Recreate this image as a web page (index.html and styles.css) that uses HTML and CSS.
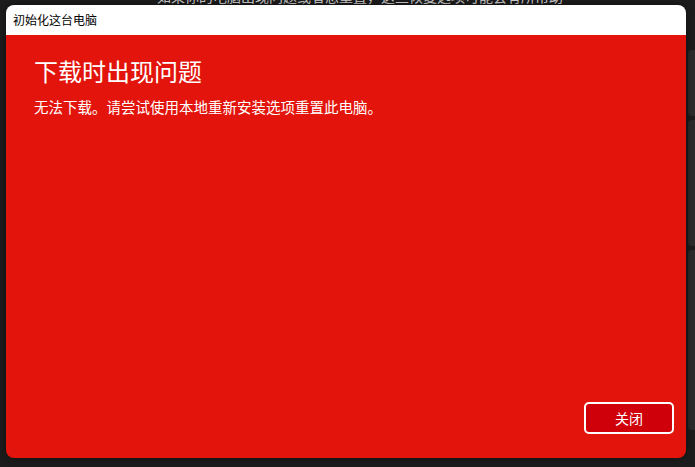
FILE: index.html
```html
<!DOCTYPE html>
<html lang="zh-CN">
<head>
<meta charset="utf-8">
<link rel="stylesheet" href="styles.css">
</head>
<body>
<div class="backdrop">
  <p class="bg-text">如果你的电脑出现问题或者想重置，这些恢复选项可能会有所帮助</p>
  <div class="bg-card c1"></div>
  <div class="bg-card c2"></div>
  <div class="bg-card c3"></div>
  <div class="bg-card c4"></div>
</div>
<div class="window">
  <div class="titlebar">初始化这台电脑</div>
  <div class="content">
    <h1 class="heading">下载时出现问题</h1>
    <p class="message">无法下载。请尝试使用本地重新安装选项重置此电脑。</p>
    <div class="spacer"></div>
    <div class="actions">
      <button class="btn">关闭</button>
    </div>
  </div>
</div>
</body>
</html>
```
FILE: styles.css
```css
html, body {
  margin: 0;
  padding: 0;
  width: 695px;
  height: 467px;
  overflow: hidden;
  background: #1c1c1c;
  font-family: "Noto Sans CJK SC", "Microsoft YaHei", sans-serif;
}
.backdrop {
  position: relative;
  width: 695px;
  height: 467px;
}
.bg-text {
  position: absolute;
  margin: 0;
  left: 157px;
  top: -14px;
  font-size: 14px;
  line-height: 20px;
  color: #cfcfcf;
  white-space: nowrap;
}
.bg-card {
  position: absolute;
  left: 688px;
  width: 20px;
  background: #2b2b2b;
  border-radius: 4px;
}
.c1 { top: 50px; height: 66px; }
.c2 { top: 120px; height: 66px; }
.c3 { top: 180px; height: 66px; }
.c4 { top: 250px; height: 180px; }
.window {
  position: absolute;
  left: 6px;
  top: 5px;
  width: 680px;
  height: 453px;
  border-radius: 8px;
  overflow: hidden;
  display: flex;
  flex-direction: column;
  box-shadow: 0 0 6px rgba(0,0,0,0.5);
}
.titlebar {
  height: 30px;
  flex: none;
  background: #ffffff;
  color: #000;
  font-size: 12px;
  line-height: 30px;
  padding-left: 7px;
}
.content {
  flex: 1;
  background: #e2140b;
  display: flex;
  flex-direction: column;
  padding: 19px 12px 24px 28px;
}
.heading {
  margin: 0;
  font-size: 24px;
  font-weight: 400;
  color: #fff;
  line-height: 34px;
}
.message {
  margin: 9px 0 0;
  font-size: 14.5px;
  color: #fff;
  line-height: 20px;
}
.spacer { flex: 1; }
.actions {
  display: flex;
  justify-content: flex-end;
}
.btn {
  width: 90px;
  height: 32px;
  border: 2px solid #ffffff;
  border-radius: 5px;
  background: #d0000a;
  color: #fff;
  font-family: inherit;
  font-size: 14px;
  padding: 0;
}
```
